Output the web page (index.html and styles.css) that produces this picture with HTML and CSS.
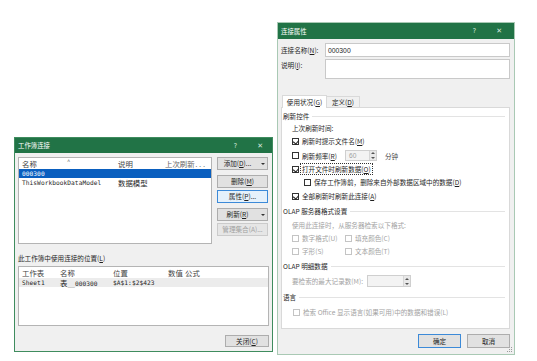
FILE: index.html
```html
<!DOCTYPE html>
<html lang="zh-CN">
<head>
  <meta charset="UTF-8">
  <meta name="viewport" content="width=device-width, initial-scale=1.0">
  <title>工作簿连接</title>
  <link rel="stylesheet" href="styles.css">
</head>
<body>
  <div class="win win-wb">
    <div class="titlebar">
      <span>工作簿连接</span>
      <span class="title-btns"><span>?</span><span class="x">✕</span></span>
    </div>
    <div class="wb-body">
      <div class="wb-top">
        <div class="list conn-list">
          <div class="lrow lhead">
            <span class="col c-name">名称<span class="sort">^</span></span>
            <span class="col c-desc">说明</span>
            <span class="col c-last">上次刷新<span class="lat">...</span></span>
          </div>
          <div class="lrow sel"><span class="col c-name lat">000300</span></div>
          <div class="lrow"><span class="col c-name lat">ThisWorkbookDataModel</span><span class="col c-desc">数据模型</span></div>
        </div>
        <div class="side-btns">
          <button class="btn drop">添加(<u>D</u>)...<span class="caret"></span></button>
          <button class="btn gap5">删除(<u>M</u>)</button>
          <button class="btn gap2 focus">属性(<u>P</u>)...</button>
          <button class="btn drop gap5">刷新(<u>R</u>)<span class="caret"></span></button>
          <button class="btn gap2 off">管理集合(A)...</button>
        </div>
      </div>
      <div class="loc-label">此工作簿中使用连接的位置(<u>L</u>)</div>
      <div class="list loc-list">
        <div class="lrow lhead">
          <span class="col l-sheet">工作表</span>
          <span class="col l-name">名称</span>
          <span class="col l-pos">位置</span>
          <span class="col l-val">数值</span>
          <span class="col">公式</span>
        </div>
        <div class="lrow grey">
          <span class="col l-sheet lat">Sheet1</span>
          <span class="col l-name">表<span class="lat">__000300</span></span>
          <span class="col l-pos lat">$A$1:$2$423</span>
        </div>
      </div>
      <div class="foot">
        <button class="btn btn-close">关闭(<u>C</u>)</button>
      </div>
    </div>
  </div>

  <div class="win win-conn">
    <div class="titlebar tall">
      <span>连接属性</span>
      <span class="title-btns"><span>?</span><span class="x">✕</span></span>
    </div>
    <div class="cp-body">
      <div class="field">
        <span class="field-label">连接名称(<u>N</u>):</span>
        <div class="input">000300</div>
      </div>
      <div class="field field-desc">
        <span class="field-label">说明(<u>I</u>):</span>
        <div class="input area"></div>
      </div>

      <div class="tabs">
        <span class="tab active">使用状况(<u>G</u>)</span>
        <span class="tab">定义(<u>D</u>)</span>
      </div>
      <div class="panel">
        <div class="row sec first">刷新控件</div>
        <div class="row sub tight">上次刷新时间:</div>
        <div class="row sub"><span class="cb on"></span>刷新时提示文件名(<u>M</u>)</div>
        <div class="row sub row-spin">
          <span class="cb"></span>刷新频率(<u>R</u>)
          <span class="spin spin-freq"><span class="spin-val">60</span><span class="spin-arrows"><i class="up"></i><i class="down"></i></span></span>
          <span class="unit">分钟</span>
        </div>
        <div class="row sub"><span class="cb on"></span><span class="focus-text">打开文件时刷新数据(<u>O</u>)</span></div>
        <div class="row sub2"><span class="cb"></span>保存工作簿前，删除来自外部数据区域中的数据(<u>D</u>)</div>
        <div class="row sub more"><span class="cb on"></span>全部刷新时刷新此连接(<u>A</u>)</div>

        <div class="row sec">OLAP 服务器格式设置</div>
        <div class="row sub more dim">使用此连接时，从服务器检索以下格式:</div>
        <div class="row sub dim"><span class="pair"><span class="cb off"></span>数字格式(U)</span><span class="cb off"></span>填充颜色(C)</div>
        <div class="row sub dim"><span class="pair"><span class="cb off"></span>字形(S)</span><span class="cb off"></span>文本颜色(T)</div>

        <div class="row sec">OLAP 明细数据</div>
        <div class="row sub more row-max dim">
          要检索的最大记录数(M):
          <span class="spin spin-max"><span class="spin-val"></span><span class="spin-arrows"><i class="up"></i><i class="down"></i></span></span>
        </div>

        <div class="row sec">语言</div>
        <div class="row sub lang dim"><span class="cb off"></span>检索 Office 显示语言(如果可用)中的数据和错误(L)</div>
      </div>

      <div class="foot foot-conn">
        <button class="btn btn-ok">确定</button>
        <button class="btn btn-cancel">取消</button>
      </div>
    </div>
    <svg class="grip" width="6" height="6" viewBox="0 0 6 6">
      <rect x="4" y="0" width="1" height="1" fill="#9a9a9a"/>
      <rect x="2" y="2" width="1" height="1" fill="#9a9a9a"/>
      <rect x="4" y="2" width="1" height="1" fill="#9a9a9a"/>
      <rect x="0" y="4" width="1" height="1" fill="#9a9a9a"/>
      <rect x="2" y="4" width="1" height="1" fill="#9a9a9a"/>
      <rect x="4" y="4" width="1" height="1" fill="#9a9a9a"/>
    </svg>
  </div>
</body>
</html>
```

FILE: styles.css
```css
* {
  box-sizing: border-box;
}
body {
  margin: 0;
  width: 537px;
  height: 361px;
  position: relative;
  overflow: hidden;
  background: #fff;
  font-family: "Noto Sans CJK SC", sans-serif;
  font-size: 6.6px;
  color: #1f1f1f;
}
u {
  text-decoration: underline;
}

/* windows */
.win {
  position: absolute;
  display: flex;
  flex-direction: column;
  background: #f0f0f0;
}
.win-wb {
  left: 14px;
  top: 137px;
  width: 259px;
  height: 215px;
  border: 1px solid #3f8c5e;
}
.win-conn {
  left: 277px;
  top: 22px;
  width: 238px;
  height: 333px;
  border: 1px solid #a9c9b4;
}
.titlebar {
  flex: none;
  height: 15px;
  background: #217346;
  color: #fff;
  font-size: 6.4px;
  display: flex;
  align-items: center;
  justify-content: space-between;
  padding: 0 9px 0 3px;
}
.titlebar.tall {
  height: 16px;
  padding-right: 12px;
}
.title-btns {
  display: flex;
  gap: 20px;
  font-family: "DejaVu Sans", sans-serif;
  color: #d6e8dc;
}
.title-btns .x {
  font-size: 7px;
}

/* buttons */
.btn {
  position: relative;
  height: 13px;
  padding: 0;
  background: #e1e1e1;
  border: 1px solid #adadad;
  font-family: inherit;
  font-size: 6.6px;
  color: #1f1f1f;
  display: flex;
  align-items: center;
  justify-content: center;
  line-height: 1;
}
.btn.drop {
  padding-right: 10px;
}
.caret {
  position: absolute;
  right: 2px;
  top: 5px;
  border-left: 2px solid transparent;
  border-right: 2px solid transparent;
  border-top: 2px solid #333;
}
.btn.focus {
  background: #e5f1fb;
  border-color: #3c8ad8;
}
.btn.off {
  color: #a0a0a0;
  background: #e6e6e6;
  border-color: #cbcbcb;
}
.gap5 { margin-top: 5px; }
.gap2 { margin-top: 2px; }

/* workbook connections */
.wb-body {
  flex: 1;
  display: flex;
  flex-direction: column;
  padding: 4px 3px 0 3px;
}
.wb-top {
  display: flex;
  gap: 5px;
}
.list {
  background: #fff;
  border: 1px solid #b4b4b4;
}
.conn-list {
  width: 194px;
  height: 87px;
}
.side-btns {
  width: 51px;
  display: flex;
  flex-direction: column;
}
.lrow {
  display: flex;
  align-items: center;
  height: 9px;
  font-size: 7.4px;
  white-space: nowrap;
}
.lhead {
  height: 11px;
  color: #444;
}
.col {
  padding-left: 3px;
}
.lat {
  font-family: "DejaVu Sans Mono", monospace;
  font-size: 6.2px;
  letter-spacing: 0.05px;
}
.c-name {
  position: relative;
  width: 96px;
}
.c-desc {
  width: 47px;
}
.c-last {
  flex: 1;
  color: #666;
}
.sort {
  position: absolute;
  left: 48px;
  top: -1px;
  font-size: 6px;
  color: #777;
}
.sel {
  background: #0a5fbf;
  color: #fff;
}
.loc-label {
  margin-top: 10px;
  height: 8px;
  line-height: 8px;
}
.loc-list {
  margin-top: 4px;
  height: 60px;
}
.l-sheet { width: 38px; }
.l-name { width: 53px; }
.l-pos { width: 55px; }
.l-val { width: 17px; }
.grey {
  background: #ececec;
}
.foot {
  display: flex;
  justify-content: flex-end;
}
.btn-close {
  margin-top: 9px;
  width: 44px;
  height: 12px;
}

/* connection properties */
.cp-body {
  flex: 1;
  display: flex;
  flex-direction: column;
  padding: 0 4px 0 3px;
}
.field {
  display: flex;
  align-items: center;
  margin-top: 4px;
}
.field-desc {
  align-items: flex-start;
  margin-top: 2px;
}
.field-desc .field-label {
  padding-top: 1px;
}
.field-label {
  width: 44px;
  flex: none;
}
.input {
  flex: 1;
  height: 14px;
  background: #fff;
  border: 1px solid #c9c9c9;
  padding-left: 2px;
  display: flex;
  align-items: center;
  font-family: "Liberation Sans", sans-serif;
  font-size: 6.8px;
}
.input.area {
  height: 20px;
}
.tabs {
  display: flex;
  align-items: flex-end;
  margin-top: 16px;
  padding-left: 1px;
}
.tab {
  width: 33px;
  height: 11px;
  display: flex;
  align-items: center;
  justify-content: center;
  border: 1px solid #d9d9d9;
  border-left: none;
  border-bottom: none;
}
.tab.active {
  width: 45px;
  height: 13px;
  background: #fff;
  border-left: 1px solid #d9d9d9;
  margin-bottom: -1px;
  position: relative;
}
.panel {
  height: 222px;
  background: #fff;
  border: 1px solid #d9d9d9;
  padding: 0 4px 0 1px;
  display: flex;
  flex-direction: column;
}
.row {
  height: 10px;
  margin-top: 3px;
  display: flex;
  align-items: center;
  white-space: nowrap;
}
.row.sec {
  margin-top: 5px;
  gap: 3px;
}
.row.sec::after {
  content: "";
  flex: 1;
  height: 1px;
  background: #e3e3e3;
}
.row.first { margin-top: 3px; }
.row.tight { margin-top: 2px; }
.row.more { margin-top: 4px; }
.sub { padding-left: 9px; }
.sub2 { padding-left: 21px; }
.dim {
  color: #a3a3a3;
}
.cb {
  position: relative;
  width: 7px;
  height: 7px;
  flex: none;
  margin-right: 3px;
  background: #fff;
  border: 1px solid #333;
}
.cb.on::after {
  content: "";
  position: absolute;
  left: 1px;
  top: 0;
  width: 3px;
  height: 4px;
  border-right: 1px solid #222;
  border-bottom: 1px solid #222;
  transform: rotate(40deg);
}
.cb.off {
  border-color: #c4c4c4;
}
.focus-text {
  outline: 1px dotted #333;
  padding: 0 1px;
  margin-left: -1px;
}
.row-spin {
  height: 11px;
  margin-top: 4px;
}
.spin {
  display: flex;
  height: 11px;
  background: #f3f3f3;
  border: 1px solid #cfcfcf;
}
.spin-freq {
  width: 32px;
  margin-left: 8px;
}
.spin-val {
  flex: 1;
  padding-left: 3px;
  color: #a0a0a0;
  font-family: "Liberation Sans", sans-serif;
  font-size: 6.6px;
  line-height: 9px;
}
.spin-arrows {
  width: 7px;
  display: flex;
  flex-direction: column;
  align-items: center;
  justify-content: space-around;
  background: #e8e8e8;
  border-left: 1px solid #d6d6d6;
}
.spin-arrows i {
  border-left: 2px solid transparent;
  border-right: 2px solid transparent;
}
.spin-arrows .up {
  border-bottom: 2px solid #555;
}
.spin-arrows .down {
  border-top: 2px solid #555;
}
.unit {
  margin-left: 8px;
  color: #444;
}
.pair {
  display: flex;
  align-items: center;
  width: 53px;
}
.row-max {
  height: 12px;
}
.spin-max {
  width: 44px;
  height: 12px;
  margin-left: 4px;
}
.lang {
  margin-top: 5px;
  padding-left: 10px;
}
.foot-conn {
  gap: 6px;
}
.btn-ok,
.btn-cancel {
  margin-top: 5px;
  width: 43px;
  height: 14px;
}
.btn-ok {
  border-color: #3c8ad8;
}
.grip {
  position: absolute;
  right: 1px;
  bottom: 1px;
}
```
